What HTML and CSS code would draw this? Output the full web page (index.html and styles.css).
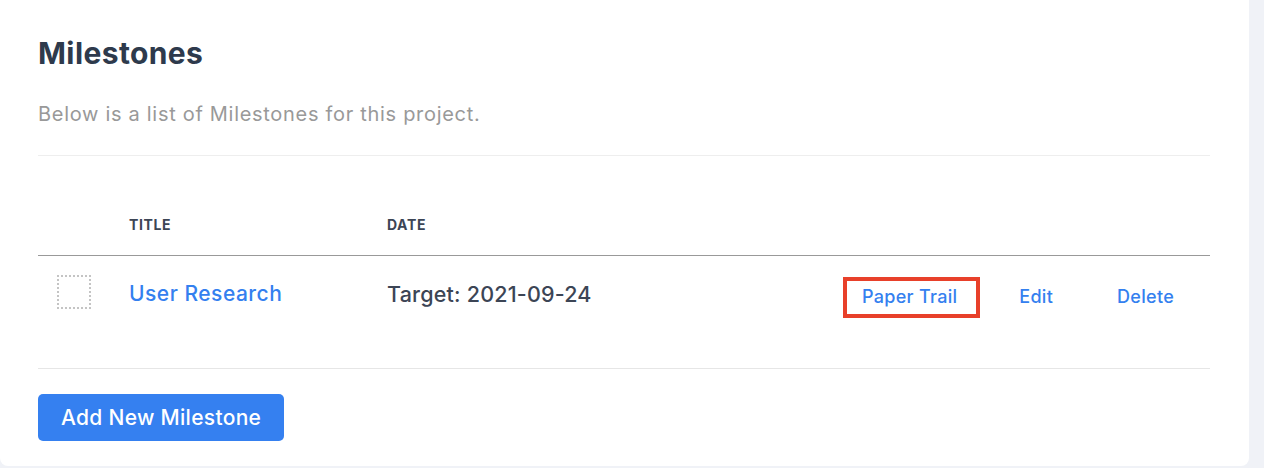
FILE: index.html
```html
<!DOCTYPE html>
<html lang="en">
<head>
    <meta charset="UTF-8">
    <title>Milestones</title>
    <link rel="stylesheet" href="styles.css">
</head>

<body>

<div class="card">
    <h2>Milestones</h2>
    <p class="lead">Below is a list of Milestones for this project.</p>

    <!-- Milestone list -->
    <table class="milestones">
        <colgroup>
            <col class="col-check">
            <col class="col-title">
            <col class="col-date">
            <col>
        </colgroup>
        <thead>
            <tr>
                <th></th>
                <th>Title</th>
                <th>Date</th>
                <th></th>
            </tr>
        </thead>
        <tbody>
            <tr>
                <td><span class="check"></span></td>
                <td><a href="#" class="title-link">User Research</a></td>
                <td class="date">Target: 2021-09-24</td>
                <td class="actions">
                    <a href="#" class="highlight">Paper Trail</a>
                    <a href="#" class="edit">Edit</a>
                    <a href="#" class="delete">Delete</a>
                </td>
            </tr>
        </tbody>
    </table>

    <button type="button">Add New Milestone</button>
</div>

</body>
</html>
```

FILE: styles.css
```css
body {
    font-family: Inter, "Noto Sans", sans-serif;
    background: #f0f2f7;
    color: #3c4555;
    margin: 0;
    padding: 0;
}
.card {
    width: 1249px;
    box-sizing: border-box;
    background: #fff;
    border-radius: 0 0 8px 8px;
    padding: 33px 39px 25px 38px;
}
h2 {
    margin: 0;
    font-size: 30px;
    font-weight: 700;
    letter-spacing: 0.4px;
    color: #2e3a4c;
    line-height: 40px;
}
.lead {
    margin: 29px 0 0;
    font-size: 20px;
    letter-spacing: 0.7px;
    color: #999;
    line-height: 24px;
    padding-bottom: 29px;
    border-bottom: 1px solid #eee;
}
table {
    width: 100%;
    border-collapse: collapse;
    margin-top: 61px;
}
.col-check {
    width: 73px;
}
.col-title {
    width: 258px;
}
.col-date {
    width: 474px;
}
th {
    text-align: left;
    text-transform: uppercase;
    font-size: 14px;
    font-weight: 700;
    letter-spacing: 0.6px;
    padding: 0 18px 22px;
    border-bottom: 1px solid #999;
    line-height: 16px;
}
td {
    vertical-align: top;
    padding: 22px 18px 50px;
    border-bottom: 1px solid #e6e6e6;
    font-size: 21px;
    line-height: 32px;
}
td:first-child {
    padding-left: 19px;
}
td.actions {
    padding: 21px 0 50px;
    white-space: nowrap;
}
.check {
    display: block;
    width: 30px;
    height: 30px;
    border: 2px dotted #c4c4c4;
    margin-top: -3px;
}
a {
    color: #3480ef;
    text-decoration: none;
}
.title-link {
    font-weight: 500;
    letter-spacing: 0.5px;
}
.date {
    font-weight: 500;
    font-size: 21.5px;
    letter-spacing: 0.2px;
}
.actions a {
    display: inline-block;
    font-size: 18px;
    font-weight: 500;
    letter-spacing: 0.3px;
    line-height: 31px;
    padding-bottom: 2px;
    border: 4px solid transparent;
    vertical-align: top;
}
.highlight {
    border-color: #e8402a !important;
    padding: 0 19px 2px 15px;
}
.edit {
    margin-left: 29px;
}
.delete {
    margin-left: 50px;
}
button {
    margin-top: 25px;
    background: #3580f0;
    color: #fff;
    border: none;
    border-radius: 5px;
    font-family: Inter, "Noto Sans", sans-serif;
    font-size: 21px;
    font-weight: 500;
    letter-spacing: 0.3px;
    padding: 0 23px;
    height: 47px;
    cursor: pointer;
}
```
